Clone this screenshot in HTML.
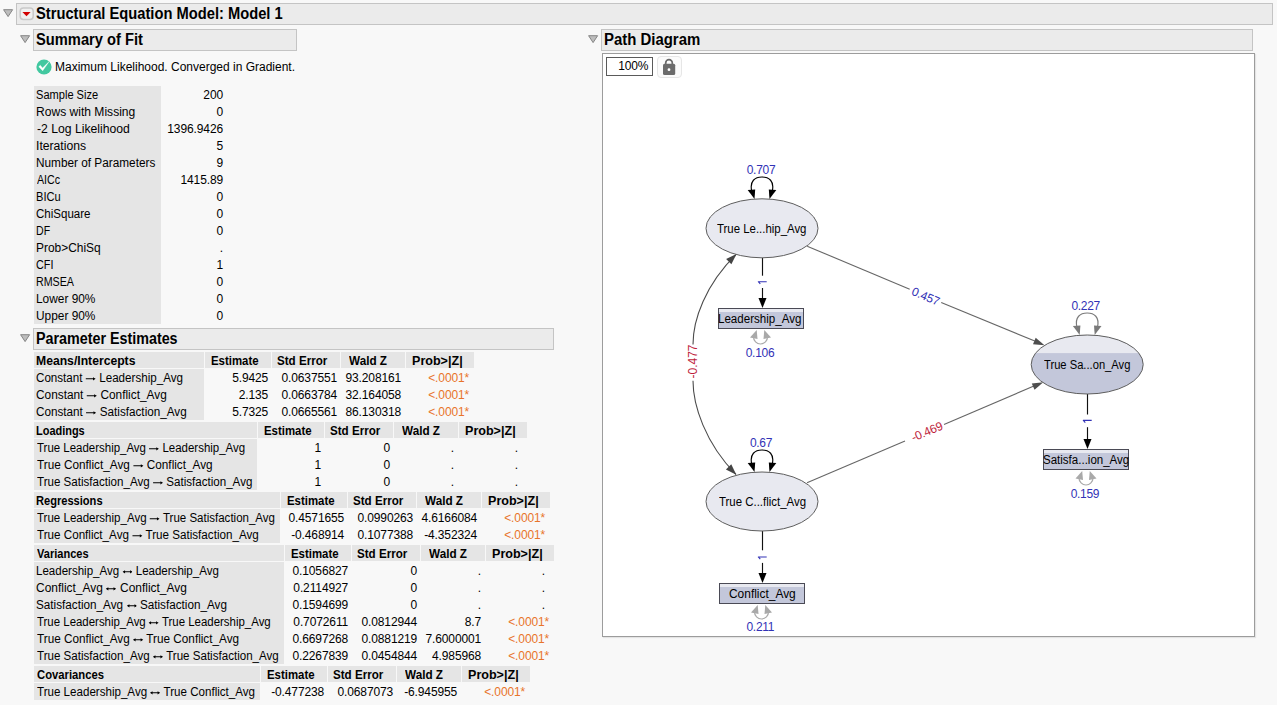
<!DOCTYPE html>
<html><head><meta charset="utf-8"><title>Structural Equation Model: Model 1</title>
<style>
html,body{margin:0;padding:0;}
body{width:1277px;height:705px;overflow:hidden;position:relative;background:#f8f8f8;font-family:"Liberation Sans", sans-serif;}
</style></head><body>
<svg style="position:absolute;left:3px;top:9px" width="12" height="10"><polygon points="0.6,0.7 9.6,0.7 5.1,7.6" fill="#bdbdbd" stroke="#858585" stroke-width="1" stroke-linejoin="round"/></svg>
<div style="position:absolute;left:16px;top:3px;width:1257px;height:22px;box-sizing:border-box;background:#ebebeb;border:1px solid #c4c4c4;"></div>
<svg style="position:absolute;left:16px;top:4px" width="20" height="20"><rect x="4.2" y="3.9" width="13" height="11.6" rx="3.2" fill="#f0f0f0" stroke="#c9c9c9" stroke-width="1.5"/><polygon points="6.4,8 14.6,8 10.5,12.3" fill="#d20000"/></svg>
<div style="position:absolute;top:5.63px;font-size:15.8px;line-height:15.8px;font-weight:700;color:#000;white-space:pre;left:35.57px;transform:scaleX(0.9307);transform-origin:0 0;">Structural Equation Model: Model 1</div>
<svg style="position:absolute;left:20px;top:35px" width="12" height="10"><polygon points="0.6,0.7 9.6,0.7 5.1,7.6" fill="#bdbdbd" stroke="#858585" stroke-width="1" stroke-linejoin="round"/></svg>
<div style="position:absolute;left:33px;top:29px;width:264px;height:22px;box-sizing:border-box;background:#ebebeb;border:1px solid #c4c4c4;"></div>
<div style="position:absolute;top:32.23px;font-size:15.8px;line-height:15.8px;font-weight:700;color:#000;white-space:pre;left:35.57px;transform:scaleX(0.9298);transform-origin:0 0;">Summary of Fit</div>
<svg style="position:absolute;left:35px;top:58px" width="18" height="18"><circle cx="9" cy="9" r="7.6" fill="#42c8a0"/><polygon points="3.8,8.7 5.3,7.3 7.5,10.1 13.9,3.8 7.7,12.8" fill="#fff" stroke="#fff" stroke-width="0.4" stroke-linejoin="round"/></svg>
<div style="position:absolute;top:61.14px;font-size:12px;line-height:12px;font-weight:400;color:#000;white-space:pre;left:55.30px;transform:scaleX(0.9996);transform-origin:0 0;">Maximum Likelihood. Converged in Gradient.</div>
<div style="position:absolute;left:34px;top:86px;width:127px;height:238px;background:#e5e5e5;"></div>
<div style="position:absolute;top:88.84px;font-size:12px;line-height:12px;font-weight:400;color:#000;white-space:pre;left:36.28px;transform:scaleX(0.9227);transform-origin:0 0;">Sample Size</div>
<div style="position:absolute;top:88.84px;font-size:12px;line-height:12px;font-weight:400;color:#000;white-space:pre;letter-spacing:-0.1px;right:1054px;margin-right:-0.1px;">200</div>
<div style="position:absolute;top:105.84px;font-size:12px;line-height:12px;font-weight:400;color:#000;white-space:pre;left:36.19px;transform:scaleX(1.0062);transform-origin:0 0;">Rows with Missing</div>
<div style="position:absolute;top:105.84px;font-size:12px;line-height:12px;font-weight:400;color:#000;white-space:pre;letter-spacing:-0.1px;right:1054px;margin-right:-0.1px;">0</div>
<div style="position:absolute;top:122.84px;font-size:12px;line-height:12px;font-weight:400;color:#000;white-space:pre;left:37.20px;transform:scaleX(1.0154);transform-origin:0 0;">-2 Log Likelihood</div>
<div style="position:absolute;top:122.84px;font-size:12px;line-height:12px;font-weight:400;color:#000;white-space:pre;letter-spacing:-0.1px;right:1054px;margin-right:-0.1px;">1396.9426</div>
<div style="position:absolute;top:139.84px;font-size:12px;line-height:12px;font-weight:400;color:#000;white-space:pre;left:36.19px;transform:scaleX(1.0146);transform-origin:0 0;">Iterations</div>
<div style="position:absolute;top:139.84px;font-size:12px;line-height:12px;font-weight:400;color:#000;white-space:pre;letter-spacing:-0.1px;right:1054px;margin-right:-0.1px;">5</div>
<div style="position:absolute;top:156.84px;font-size:12px;line-height:12px;font-weight:400;color:#000;white-space:pre;left:36.22px;transform:scaleX(0.9833);transform-origin:0 0;">Number of Parameters</div>
<div style="position:absolute;top:156.84px;font-size:12px;line-height:12px;font-weight:400;color:#000;white-space:pre;letter-spacing:-0.1px;right:1054px;margin-right:-0.1px;">9</div>
<div style="position:absolute;top:173.84px;font-size:12px;line-height:12px;font-weight:400;color:#000;white-space:pre;left:37.20px;transform:scaleX(0.8885);transform-origin:0 0;">AICc</div>
<div style="position:absolute;top:173.84px;font-size:12px;line-height:12px;font-weight:400;color:#000;white-space:pre;letter-spacing:-0.1px;right:1054px;margin-right:-0.1px;">1415.89</div>
<div style="position:absolute;top:190.84px;font-size:12px;line-height:12px;font-weight:400;color:#000;white-space:pre;left:36.28px;transform:scaleX(0.9240);transform-origin:0 0;">BICu</div>
<div style="position:absolute;top:190.84px;font-size:12px;line-height:12px;font-weight:400;color:#000;white-space:pre;letter-spacing:-0.1px;right:1054px;margin-right:-0.1px;">0</div>
<div style="position:absolute;top:207.84px;font-size:12px;line-height:12px;font-weight:400;color:#000;white-space:pre;left:36.24px;transform:scaleX(0.9600);transform-origin:0 0;">ChiSquare</div>
<div style="position:absolute;top:207.84px;font-size:12px;line-height:12px;font-weight:400;color:#000;white-space:pre;letter-spacing:-0.1px;right:1054px;margin-right:-0.1px;">0</div>
<div style="position:absolute;top:224.84px;font-size:12px;line-height:12px;font-weight:400;color:#000;white-space:pre;left:36.32px;transform:scaleX(0.8800);transform-origin:0 0;">DF</div>
<div style="position:absolute;top:224.84px;font-size:12px;line-height:12px;font-weight:400;color:#000;white-space:pre;letter-spacing:-0.1px;right:1054px;margin-right:-0.1px;">0</div>
<div style="position:absolute;top:241.84px;font-size:12px;line-height:12px;font-weight:400;color:#000;white-space:pre;left:36.21px;transform:scaleX(0.9937);transform-origin:0 0;">Prob&gt;ChiSq</div>
<div style="position:absolute;top:241.84px;font-size:12px;line-height:12px;font-weight:400;color:#000;white-space:pre;letter-spacing:-0.1px;right:1054px;margin-right:-0.1px;">.</div>
<div style="position:absolute;top:258.84px;font-size:12px;line-height:12px;font-weight:400;color:#000;white-space:pre;left:36.30px;transform:scaleX(0.9000);transform-origin:0 0;">CFI</div>
<div style="position:absolute;top:258.84px;font-size:12px;line-height:12px;font-weight:400;color:#000;white-space:pre;letter-spacing:-0.1px;right:1054px;margin-right:-0.1px;">1</div>
<div style="position:absolute;top:275.84px;font-size:12px;line-height:12px;font-weight:400;color:#000;white-space:pre;left:36.31px;transform:scaleX(0.8905);transform-origin:0 0;">RMSEA</div>
<div style="position:absolute;top:275.84px;font-size:12px;line-height:12px;font-weight:400;color:#000;white-space:pre;letter-spacing:-0.1px;right:1054px;margin-right:-0.1px;">0</div>
<div style="position:absolute;top:292.84px;font-size:12px;line-height:12px;font-weight:400;color:#000;white-space:pre;left:36.21px;transform:scaleX(0.9898);transform-origin:0 0;">Lower 90%</div>
<div style="position:absolute;top:292.84px;font-size:12px;line-height:12px;font-weight:400;color:#000;white-space:pre;letter-spacing:-0.1px;right:1054px;margin-right:-0.1px;">0</div>
<div style="position:absolute;top:309.84px;font-size:12px;line-height:12px;font-weight:400;color:#000;white-space:pre;left:36.21px;transform:scaleX(0.9898);transform-origin:0 0;">Upper 90%</div>
<div style="position:absolute;top:309.84px;font-size:12px;line-height:12px;font-weight:400;color:#000;white-space:pre;letter-spacing:-0.1px;right:1054px;margin-right:-0.1px;">0</div>
<svg style="position:absolute;left:20px;top:334px" width="12" height="10"><polygon points="0.6,0.7 9.6,0.7 5.1,7.6" fill="#bdbdbd" stroke="#858585" stroke-width="1" stroke-linejoin="round"/></svg>
<div style="position:absolute;left:33px;top:328px;width:521px;height:22px;box-sizing:border-box;background:#ebebeb;border:1px solid #c4c4c4;"></div>
<div style="position:absolute;top:330.83px;font-size:15.8px;line-height:15.8px;font-weight:700;color:#000;white-space:pre;left:35.59px;transform:scaleX(0.9058);transform-origin:0 0;">Parameter Estimates</div>
<div style="position:absolute;left:34px;top:352px;width:170px;height:16px;background:#e5e5e5;"></div>
<div style="position:absolute;left:205px;top:352px;width:66px;height:16px;background:#e5e5e5;"></div>
<div style="position:absolute;left:272px;top:352px;width:68px;height:16px;background:#e5e5e5;"></div>
<div style="position:absolute;left:341px;top:352px;width:64px;height:16px;background:#e5e5e5;"></div>
<div style="position:absolute;left:406px;top:352px;width:68px;height:16px;background:#e5e5e5;"></div>
<div style="position:absolute;left:34px;top:369px;width:170px;height:51px;background:#e5e5e5;"></div>
<div style="position:absolute;top:354.84px;font-size:12px;line-height:12px;font-weight:700;color:#000;white-space:pre;left:36.09px;transform:scaleX(1.0144);transform-origin:0 0;">Means/Intercepts</div>
<div style="position:absolute;top:354.84px;font-size:12px;line-height:12px;font-weight:700;color:#000;white-space:pre;left:210.55px;transform:scaleX(0.9510);transform-origin:0 0;">Estimate</div>
<div style="position:absolute;top:354.84px;font-size:12px;line-height:12px;font-weight:700;color:#000;white-space:pre;left:277.13px;transform:scaleX(0.9667);transform-origin:0 0;">Std Error</div>
<div style="position:absolute;top:354.84px;font-size:12px;line-height:12px;font-weight:700;color:#000;white-space:pre;left:349.20px;transform:scaleX(0.9769);transform-origin:0 0;">Wald Z</div>
<div style="position:absolute;top:354.84px;font-size:12px;line-height:12px;font-weight:700;color:#000;white-space:pre;left:412.25px;transform:scaleX(1.0468);transform-origin:0 0;">Prob&gt;|Z|</div>
<div style="position:absolute;top:371.84px;font-size:12px;line-height:12px;font-weight:400;color:#000;white-space:pre;left:36.13px;transform:scaleX(0.9680);transform-origin:0 0;">Constant <svg width="10.6" height="8" viewBox="0 0 10.6 8" style="display:inline-block;vertical-align:baseline"><path d="M0.3 4.8 H8.6" stroke="currentColor" stroke-width="1.1"/><polygon points="10.6,4.8 7.9,3.2 7.9,6.4" fill="currentColor"/></svg> Leadership_Avg</div>
<div style="position:absolute;top:371.84px;font-size:12px;line-height:12px;font-weight:400;color:#000;white-space:pre;letter-spacing:-0.12px;right:1009px;margin-right:-0.12px;">5.9425</div>
<div style="position:absolute;top:371.84px;font-size:12px;line-height:12px;font-weight:400;color:#000;white-space:pre;letter-spacing:-0.12px;right:940px;margin-right:-0.12px;">0.0637551</div>
<div style="position:absolute;top:371.84px;font-size:12px;line-height:12px;font-weight:400;color:#000;white-space:pre;letter-spacing:-0.12px;right:876px;margin-right:-0.12px;">93.208161</div>
<div style="position:absolute;top:371.84px;font-size:12px;line-height:12px;font-weight:400;color:#e8742a;white-space:pre;letter-spacing:-0.12px;right:808px;margin-right:-0.12px;">&lt;.0001*</div>
<div style="position:absolute;top:388.84px;font-size:12px;line-height:12px;font-weight:400;color:#000;white-space:pre;left:36.11px;transform:scaleX(0.9870);transform-origin:0 0;">Constant <svg width="10.6" height="8" viewBox="0 0 10.6 8" style="display:inline-block;vertical-align:baseline"><path d="M0.3 4.8 H8.6" stroke="currentColor" stroke-width="1.1"/><polygon points="10.6,4.8 7.9,3.2 7.9,6.4" fill="currentColor"/></svg> Conflict_Avg</div>
<div style="position:absolute;top:388.84px;font-size:12px;line-height:12px;font-weight:400;color:#000;white-space:pre;letter-spacing:-0.12px;right:1009px;margin-right:-0.12px;">2.135</div>
<div style="position:absolute;top:388.84px;font-size:12px;line-height:12px;font-weight:400;color:#000;white-space:pre;letter-spacing:-0.12px;right:940px;margin-right:-0.12px;">0.0663784</div>
<div style="position:absolute;top:388.84px;font-size:12px;line-height:12px;font-weight:400;color:#000;white-space:pre;letter-spacing:-0.12px;right:876px;margin-right:-0.12px;">32.164058</div>
<div style="position:absolute;top:388.84px;font-size:12px;line-height:12px;font-weight:400;color:#e8742a;white-space:pre;letter-spacing:-0.12px;right:808px;margin-right:-0.12px;">&lt;.0001*</div>
<div style="position:absolute;top:405.84px;font-size:12px;line-height:12px;font-weight:400;color:#000;white-space:pre;left:36.12px;transform:scaleX(0.9758);transform-origin:0 0;">Constant <svg width="10.6" height="8" viewBox="0 0 10.6 8" style="display:inline-block;vertical-align:baseline"><path d="M0.3 4.8 H8.6" stroke="currentColor" stroke-width="1.1"/><polygon points="10.6,4.8 7.9,3.2 7.9,6.4" fill="currentColor"/></svg> Satisfaction_Avg</div>
<div style="position:absolute;top:405.84px;font-size:12px;line-height:12px;font-weight:400;color:#000;white-space:pre;letter-spacing:-0.12px;right:1009px;margin-right:-0.12px;">5.7325</div>
<div style="position:absolute;top:405.84px;font-size:12px;line-height:12px;font-weight:400;color:#000;white-space:pre;letter-spacing:-0.12px;right:940px;margin-right:-0.12px;">0.0665561</div>
<div style="position:absolute;top:405.84px;font-size:12px;line-height:12px;font-weight:400;color:#000;white-space:pre;letter-spacing:-0.12px;right:876px;margin-right:-0.12px;">86.130318</div>
<div style="position:absolute;top:405.84px;font-size:12px;line-height:12px;font-weight:400;color:#e8742a;white-space:pre;letter-spacing:-0.12px;right:808px;margin-right:-0.12px;">&lt;.0001*</div>
<div style="position:absolute;left:34px;top:422px;width:223px;height:16px;background:#e5e5e5;"></div>
<div style="position:absolute;left:258px;top:422px;width:66px;height:16px;background:#e5e5e5;"></div>
<div style="position:absolute;left:325px;top:422px;width:68px;height:16px;background:#e5e5e5;"></div>
<div style="position:absolute;left:394px;top:422px;width:64px;height:16px;background:#e5e5e5;"></div>
<div style="position:absolute;left:459px;top:422px;width:68px;height:16px;background:#e5e5e5;"></div>
<div style="position:absolute;left:34px;top:439px;width:223px;height:51px;background:#e5e5e5;"></div>
<div style="position:absolute;top:424.84px;font-size:12px;line-height:12px;font-weight:700;color:#000;white-space:pre;left:36.19px;transform:scaleX(0.9135);transform-origin:0 0;">Loadings</div>
<div style="position:absolute;top:424.84px;font-size:12px;line-height:12px;font-weight:700;color:#000;white-space:pre;left:263.55px;transform:scaleX(0.9510);transform-origin:0 0;">Estimate</div>
<div style="position:absolute;top:424.84px;font-size:12px;line-height:12px;font-weight:700;color:#000;white-space:pre;left:330.13px;transform:scaleX(0.9667);transform-origin:0 0;">Std Error</div>
<div style="position:absolute;top:424.84px;font-size:12px;line-height:12px;font-weight:700;color:#000;white-space:pre;left:402.20px;transform:scaleX(0.9769);transform-origin:0 0;">Wald Z</div>
<div style="position:absolute;top:424.84px;font-size:12px;line-height:12px;font-weight:700;color:#000;white-space:pre;left:465.25px;transform:scaleX(1.0468);transform-origin:0 0;">Prob&gt;|Z|</div>
<div style="position:absolute;top:441.84px;font-size:12px;line-height:12px;font-weight:400;color:#000;white-space:pre;left:37.10px;transform:scaleX(0.9553);transform-origin:0 0;">True Leadership_Avg <svg width="10.6" height="8" viewBox="0 0 10.6 8" style="display:inline-block;vertical-align:baseline"><path d="M0.3 4.8 H8.6" stroke="currentColor" stroke-width="1.1"/><polygon points="10.6,4.8 7.9,3.2 7.9,6.4" fill="currentColor"/></svg> Leadership_Avg</div>
<div style="position:absolute;top:441.84px;font-size:12px;line-height:12px;font-weight:400;color:#000;white-space:pre;letter-spacing:-0.12px;right:956px;margin-right:-0.12px;">1</div>
<div style="position:absolute;top:441.84px;font-size:12px;line-height:12px;font-weight:400;color:#000;white-space:pre;letter-spacing:-0.12px;right:887px;margin-right:-0.12px;">0</div>
<div style="position:absolute;top:441.84px;font-size:12px;line-height:12px;font-weight:400;color:#000;white-space:pre;right:823px;">.</div>
<div style="position:absolute;top:441.84px;font-size:12px;line-height:12px;font-weight:400;color:#000;white-space:pre;right:759px;">.</div>
<div style="position:absolute;top:458.84px;font-size:12px;line-height:12px;font-weight:400;color:#000;white-space:pre;left:37.10px;transform:scaleX(0.9804);transform-origin:0 0;">True Conflict_Avg <svg width="10.6" height="8" viewBox="0 0 10.6 8" style="display:inline-block;vertical-align:baseline"><path d="M0.3 4.8 H8.6" stroke="currentColor" stroke-width="1.1"/><polygon points="10.6,4.8 7.9,3.2 7.9,6.4" fill="currentColor"/></svg> Conflict_Avg</div>
<div style="position:absolute;top:458.84px;font-size:12px;line-height:12px;font-weight:400;color:#000;white-space:pre;letter-spacing:-0.12px;right:956px;margin-right:-0.12px;">1</div>
<div style="position:absolute;top:458.84px;font-size:12px;line-height:12px;font-weight:400;color:#000;white-space:pre;letter-spacing:-0.12px;right:887px;margin-right:-0.12px;">0</div>
<div style="position:absolute;top:458.84px;font-size:12px;line-height:12px;font-weight:400;color:#000;white-space:pre;right:823px;">.</div>
<div style="position:absolute;top:458.84px;font-size:12px;line-height:12px;font-weight:400;color:#000;white-space:pre;right:759px;">.</div>
<div style="position:absolute;top:475.84px;font-size:12px;line-height:12px;font-weight:400;color:#000;white-space:pre;left:37.10px;transform:scaleX(0.9650);transform-origin:0 0;">True Satisfaction_Avg <svg width="10.6" height="8" viewBox="0 0 10.6 8" style="display:inline-block;vertical-align:baseline"><path d="M0.3 4.8 H8.6" stroke="currentColor" stroke-width="1.1"/><polygon points="10.6,4.8 7.9,3.2 7.9,6.4" fill="currentColor"/></svg> Satisfaction_Avg</div>
<div style="position:absolute;top:475.84px;font-size:12px;line-height:12px;font-weight:400;color:#000;white-space:pre;letter-spacing:-0.12px;right:956px;margin-right:-0.12px;">1</div>
<div style="position:absolute;top:475.84px;font-size:12px;line-height:12px;font-weight:400;color:#000;white-space:pre;letter-spacing:-0.12px;right:887px;margin-right:-0.12px;">0</div>
<div style="position:absolute;top:475.84px;font-size:12px;line-height:12px;font-weight:400;color:#000;white-space:pre;right:823px;">.</div>
<div style="position:absolute;top:475.84px;font-size:12px;line-height:12px;font-weight:400;color:#000;white-space:pre;right:759px;">.</div>
<div style="position:absolute;left:34px;top:492px;width:246px;height:16px;background:#e5e5e5;"></div>
<div style="position:absolute;left:281px;top:492px;width:66px;height:16px;background:#e5e5e5;"></div>
<div style="position:absolute;left:348px;top:492px;width:68px;height:16px;background:#e5e5e5;"></div>
<div style="position:absolute;left:417px;top:492px;width:64px;height:16px;background:#e5e5e5;"></div>
<div style="position:absolute;left:482px;top:492px;width:68px;height:16px;background:#e5e5e5;"></div>
<div style="position:absolute;left:34px;top:509px;width:246px;height:34px;background:#e5e5e5;"></div>
<div style="position:absolute;top:494.84px;font-size:12px;line-height:12px;font-weight:700;color:#000;white-space:pre;left:36.18px;transform:scaleX(0.9239);transform-origin:0 0;">Regressions</div>
<div style="position:absolute;top:494.84px;font-size:12px;line-height:12px;font-weight:700;color:#000;white-space:pre;left:286.55px;transform:scaleX(0.9510);transform-origin:0 0;">Estimate</div>
<div style="position:absolute;top:494.84px;font-size:12px;line-height:12px;font-weight:700;color:#000;white-space:pre;left:353.13px;transform:scaleX(0.9667);transform-origin:0 0;">Std Error</div>
<div style="position:absolute;top:494.84px;font-size:12px;line-height:12px;font-weight:700;color:#000;white-space:pre;left:425.20px;transform:scaleX(0.9769);transform-origin:0 0;">Wald Z</div>
<div style="position:absolute;top:494.84px;font-size:12px;line-height:12px;font-weight:700;color:#000;white-space:pre;left:488.25px;transform:scaleX(1.0468);transform-origin:0 0;">Prob&gt;|Z|</div>
<div style="position:absolute;top:511.84px;font-size:12px;line-height:12px;font-weight:400;color:#000;white-space:pre;left:37.10px;transform:scaleX(0.9603);transform-origin:0 0;">True Leadership_Avg <svg width="10.6" height="8" viewBox="0 0 10.6 8" style="display:inline-block;vertical-align:baseline"><path d="M0.3 4.8 H8.6" stroke="currentColor" stroke-width="1.1"/><polygon points="10.6,4.8 7.9,3.2 7.9,6.4" fill="currentColor"/></svg> True Satisfaction_Avg</div>
<div style="position:absolute;top:511.84px;font-size:12px;line-height:12px;font-weight:400;color:#000;white-space:pre;letter-spacing:-0.12px;right:933px;margin-right:-0.12px;">0.4571655</div>
<div style="position:absolute;top:511.84px;font-size:12px;line-height:12px;font-weight:400;color:#000;white-space:pre;letter-spacing:-0.12px;right:864px;margin-right:-0.12px;">0.0990263</div>
<div style="position:absolute;top:511.84px;font-size:12px;line-height:12px;font-weight:400;color:#000;white-space:pre;letter-spacing:-0.12px;right:800px;margin-right:-0.12px;">4.6166084</div>
<div style="position:absolute;top:511.84px;font-size:12px;line-height:12px;font-weight:400;color:#e8742a;white-space:pre;letter-spacing:-0.12px;right:732px;margin-right:-0.12px;">&lt;.0001*</div>
<div style="position:absolute;top:528.84px;font-size:12px;line-height:12px;font-weight:400;color:#000;white-space:pre;left:37.10px;transform:scaleX(0.9706);transform-origin:0 0;">True Conflict_Avg <svg width="10.6" height="8" viewBox="0 0 10.6 8" style="display:inline-block;vertical-align:baseline"><path d="M0.3 4.8 H8.6" stroke="currentColor" stroke-width="1.1"/><polygon points="10.6,4.8 7.9,3.2 7.9,6.4" fill="currentColor"/></svg> True Satisfaction_Avg</div>
<div style="position:absolute;top:528.84px;font-size:12px;line-height:12px;font-weight:400;color:#000;white-space:pre;letter-spacing:-0.12px;right:933px;margin-right:-0.12px;">-0.468914</div>
<div style="position:absolute;top:528.84px;font-size:12px;line-height:12px;font-weight:400;color:#000;white-space:pre;letter-spacing:-0.12px;right:864px;margin-right:-0.12px;">0.1077388</div>
<div style="position:absolute;top:528.84px;font-size:12px;line-height:12px;font-weight:400;color:#000;white-space:pre;letter-spacing:-0.12px;right:800px;margin-right:-0.12px;">-4.352324</div>
<div style="position:absolute;top:528.84px;font-size:12px;line-height:12px;font-weight:400;color:#e8742a;white-space:pre;letter-spacing:-0.12px;right:732px;margin-right:-0.12px;">&lt;.0001*</div>
<div style="position:absolute;left:34px;top:545px;width:250px;height:16px;background:#e5e5e5;"></div>
<div style="position:absolute;left:285px;top:545px;width:66px;height:16px;background:#e5e5e5;"></div>
<div style="position:absolute;left:352px;top:545px;width:68px;height:16px;background:#e5e5e5;"></div>
<div style="position:absolute;left:421px;top:545px;width:64px;height:16px;background:#e5e5e5;"></div>
<div style="position:absolute;left:486px;top:545px;width:68px;height:16px;background:#e5e5e5;"></div>
<div style="position:absolute;left:34px;top:562px;width:250px;height:102px;background:#e5e5e5;"></div>
<div style="position:absolute;top:547.84px;font-size:12px;line-height:12px;font-weight:700;color:#000;white-space:pre;left:37.10px;transform:scaleX(0.9196);transform-origin:0 0;">Variances</div>
<div style="position:absolute;top:547.84px;font-size:12px;line-height:12px;font-weight:700;color:#000;white-space:pre;left:290.55px;transform:scaleX(0.9510);transform-origin:0 0;">Estimate</div>
<div style="position:absolute;top:547.84px;font-size:12px;line-height:12px;font-weight:700;color:#000;white-space:pre;left:357.13px;transform:scaleX(0.9667);transform-origin:0 0;">Std Error</div>
<div style="position:absolute;top:547.84px;font-size:12px;line-height:12px;font-weight:700;color:#000;white-space:pre;left:429.20px;transform:scaleX(0.9769);transform-origin:0 0;">Wald Z</div>
<div style="position:absolute;top:547.84px;font-size:12px;line-height:12px;font-weight:700;color:#000;white-space:pre;left:492.25px;transform:scaleX(1.0468);transform-origin:0 0;">Prob&gt;|Z|</div>
<div style="position:absolute;top:564.84px;font-size:12px;line-height:12px;font-weight:400;color:#000;white-space:pre;left:36.14px;transform:scaleX(0.9608);transform-origin:0 0;">Leadership_Avg <svg width="10.6" height="8" viewBox="0 0 10.6 8" style="display:inline-block;vertical-align:baseline"><path d="M2 4.8 H8.6" stroke="currentColor" stroke-width="1.1"/><polygon points="10.6,4.8 7.9,3.2 7.9,6.4" fill="currentColor"/><polygon points="0,4.8 2.7,3.2 2.7,6.4" fill="currentColor"/></svg> Leadership_Avg</div>
<div style="position:absolute;top:564.84px;font-size:12px;line-height:12px;font-weight:400;color:#000;white-space:pre;letter-spacing:-0.12px;right:929px;margin-right:-0.12px;">0.1056827</div>
<div style="position:absolute;top:564.84px;font-size:12px;line-height:12px;font-weight:400;color:#000;white-space:pre;letter-spacing:-0.12px;right:860px;margin-right:-0.12px;">0</div>
<div style="position:absolute;top:564.84px;font-size:12px;line-height:12px;font-weight:400;color:#000;white-space:pre;right:796px;">.</div>
<div style="position:absolute;top:564.84px;font-size:12px;line-height:12px;font-weight:400;color:#000;white-space:pre;right:732px;">.</div>
<div style="position:absolute;top:581.84px;font-size:12px;line-height:12px;font-weight:400;color:#000;white-space:pre;left:36.10px;transform:scaleX(0.9953);transform-origin:0 0;">Conflict_Avg <svg width="10.6" height="8" viewBox="0 0 10.6 8" style="display:inline-block;vertical-align:baseline"><path d="M2 4.8 H8.6" stroke="currentColor" stroke-width="1.1"/><polygon points="10.6,4.8 7.9,3.2 7.9,6.4" fill="currentColor"/><polygon points="0,4.8 2.7,3.2 2.7,6.4" fill="currentColor"/></svg> Conflict_Avg</div>
<div style="position:absolute;top:581.84px;font-size:12px;line-height:12px;font-weight:400;color:#000;white-space:pre;letter-spacing:-0.12px;right:929px;margin-right:-0.12px;">0.2114927</div>
<div style="position:absolute;top:581.84px;font-size:12px;line-height:12px;font-weight:400;color:#000;white-space:pre;letter-spacing:-0.12px;right:860px;margin-right:-0.12px;">0</div>
<div style="position:absolute;top:581.84px;font-size:12px;line-height:12px;font-weight:400;color:#000;white-space:pre;right:796px;">.</div>
<div style="position:absolute;top:581.84px;font-size:12px;line-height:12px;font-weight:400;color:#000;white-space:pre;right:732px;">.</div>
<div style="position:absolute;top:598.84px;font-size:12px;line-height:12px;font-weight:400;color:#000;white-space:pre;left:36.12px;transform:scaleX(0.9763);transform-origin:0 0;">Satisfaction_Avg <svg width="10.6" height="8" viewBox="0 0 10.6 8" style="display:inline-block;vertical-align:baseline"><path d="M2 4.8 H8.6" stroke="currentColor" stroke-width="1.1"/><polygon points="10.6,4.8 7.9,3.2 7.9,6.4" fill="currentColor"/><polygon points="0,4.8 2.7,3.2 2.7,6.4" fill="currentColor"/></svg> Satisfaction_Avg</div>
<div style="position:absolute;top:598.84px;font-size:12px;line-height:12px;font-weight:400;color:#000;white-space:pre;letter-spacing:-0.12px;right:929px;margin-right:-0.12px;">0.1594699</div>
<div style="position:absolute;top:598.84px;font-size:12px;line-height:12px;font-weight:400;color:#000;white-space:pre;letter-spacing:-0.12px;right:860px;margin-right:-0.12px;">0</div>
<div style="position:absolute;top:598.84px;font-size:12px;line-height:12px;font-weight:400;color:#000;white-space:pre;right:796px;">.</div>
<div style="position:absolute;top:598.84px;font-size:12px;line-height:12px;font-weight:400;color:#000;white-space:pre;right:732px;">.</div>
<div style="position:absolute;top:615.84px;font-size:12px;line-height:12px;font-weight:400;color:#000;white-space:pre;left:37.10px;transform:scaleX(0.9531);transform-origin:0 0;">True Leadership_Avg <svg width="10.6" height="8" viewBox="0 0 10.6 8" style="display:inline-block;vertical-align:baseline"><path d="M2 4.8 H8.6" stroke="currentColor" stroke-width="1.1"/><polygon points="10.6,4.8 7.9,3.2 7.9,6.4" fill="currentColor"/><polygon points="0,4.8 2.7,3.2 2.7,6.4" fill="currentColor"/></svg> True Leadership_Avg</div>
<div style="position:absolute;top:615.84px;font-size:12px;line-height:12px;font-weight:400;color:#000;white-space:pre;letter-spacing:-0.12px;right:929px;margin-right:-0.12px;">0.7072611</div>
<div style="position:absolute;top:615.84px;font-size:12px;line-height:12px;font-weight:400;color:#000;white-space:pre;letter-spacing:-0.12px;right:860px;margin-right:-0.12px;">0.0812944</div>
<div style="position:absolute;top:615.84px;font-size:12px;line-height:12px;font-weight:400;color:#000;white-space:pre;letter-spacing:-0.12px;right:796px;margin-right:-0.12px;">8.7</div>
<div style="position:absolute;top:615.84px;font-size:12px;line-height:12px;font-weight:400;color:#e8742a;white-space:pre;letter-spacing:-0.12px;right:728px;margin-right:-0.12px;">&lt;.0001*</div>
<div style="position:absolute;top:632.84px;font-size:12px;line-height:12px;font-weight:400;color:#000;white-space:pre;left:37.10px;transform:scaleX(0.9786);transform-origin:0 0;">True Conflict_Avg <svg width="10.6" height="8" viewBox="0 0 10.6 8" style="display:inline-block;vertical-align:baseline"><path d="M2 4.8 H8.6" stroke="currentColor" stroke-width="1.1"/><polygon points="10.6,4.8 7.9,3.2 7.9,6.4" fill="currentColor"/><polygon points="0,4.8 2.7,3.2 2.7,6.4" fill="currentColor"/></svg> True Conflict_Avg</div>
<div style="position:absolute;top:632.84px;font-size:12px;line-height:12px;font-weight:400;color:#000;white-space:pre;letter-spacing:-0.12px;right:929px;margin-right:-0.12px;">0.6697268</div>
<div style="position:absolute;top:632.84px;font-size:12px;line-height:12px;font-weight:400;color:#000;white-space:pre;letter-spacing:-0.12px;right:860px;margin-right:-0.12px;">0.0881219</div>
<div style="position:absolute;top:632.84px;font-size:12px;line-height:12px;font-weight:400;color:#000;white-space:pre;letter-spacing:-0.12px;right:796px;margin-right:-0.12px;">7.6000001</div>
<div style="position:absolute;top:632.84px;font-size:12px;line-height:12px;font-weight:400;color:#e8742a;white-space:pre;letter-spacing:-0.12px;right:728px;margin-right:-0.12px;">&lt;.0001*</div>
<div style="position:absolute;top:649.84px;font-size:12px;line-height:12px;font-weight:400;color:#000;white-space:pre;left:37.10px;transform:scaleX(0.9652);transform-origin:0 0;">True Satisfaction_Avg <svg width="10.6" height="8" viewBox="0 0 10.6 8" style="display:inline-block;vertical-align:baseline"><path d="M2 4.8 H8.6" stroke="currentColor" stroke-width="1.1"/><polygon points="10.6,4.8 7.9,3.2 7.9,6.4" fill="currentColor"/><polygon points="0,4.8 2.7,3.2 2.7,6.4" fill="currentColor"/></svg> True Satisfaction_Avg</div>
<div style="position:absolute;top:649.84px;font-size:12px;line-height:12px;font-weight:400;color:#000;white-space:pre;letter-spacing:-0.12px;right:929px;margin-right:-0.12px;">0.2267839</div>
<div style="position:absolute;top:649.84px;font-size:12px;line-height:12px;font-weight:400;color:#000;white-space:pre;letter-spacing:-0.12px;right:860px;margin-right:-0.12px;">0.0454844</div>
<div style="position:absolute;top:649.84px;font-size:12px;line-height:12px;font-weight:400;color:#000;white-space:pre;letter-spacing:-0.12px;right:796px;margin-right:-0.12px;">4.985968</div>
<div style="position:absolute;top:649.84px;font-size:12px;line-height:12px;font-weight:400;color:#e8742a;white-space:pre;letter-spacing:-0.12px;right:728px;margin-right:-0.12px;">&lt;.0001*</div>
<div style="position:absolute;left:34px;top:666px;width:226px;height:16px;background:#e5e5e5;"></div>
<div style="position:absolute;left:261px;top:666px;width:66px;height:16px;background:#e5e5e5;"></div>
<div style="position:absolute;left:328px;top:666px;width:68px;height:16px;background:#e5e5e5;"></div>
<div style="position:absolute;left:397px;top:666px;width:64px;height:16px;background:#e5e5e5;"></div>
<div style="position:absolute;left:462px;top:666px;width:68px;height:16px;background:#e5e5e5;"></div>
<div style="position:absolute;left:34px;top:683px;width:226px;height:17px;background:#e5e5e5;"></div>
<div style="position:absolute;top:668.84px;font-size:12px;line-height:12px;font-weight:700;color:#000;white-space:pre;left:37.10px;transform:scaleX(0.9380);transform-origin:0 0;">Covariances</div>
<div style="position:absolute;top:668.84px;font-size:12px;line-height:12px;font-weight:700;color:#000;white-space:pre;left:266.55px;transform:scaleX(0.9510);transform-origin:0 0;">Estimate</div>
<div style="position:absolute;top:668.84px;font-size:12px;line-height:12px;font-weight:700;color:#000;white-space:pre;left:333.13px;transform:scaleX(0.9667);transform-origin:0 0;">Std Error</div>
<div style="position:absolute;top:668.84px;font-size:12px;line-height:12px;font-weight:700;color:#000;white-space:pre;left:405.20px;transform:scaleX(0.9769);transform-origin:0 0;">Wald Z</div>
<div style="position:absolute;top:668.84px;font-size:12px;line-height:12px;font-weight:700;color:#000;white-space:pre;left:468.25px;transform:scaleX(1.0468);transform-origin:0 0;">Prob&gt;|Z|</div>
<div style="position:absolute;top:685.84px;font-size:12px;line-height:12px;font-weight:400;color:#000;white-space:pre;left:37.10px;transform:scaleX(0.9653);transform-origin:0 0;">True Leadership_Avg <svg width="10.6" height="8" viewBox="0 0 10.6 8" style="display:inline-block;vertical-align:baseline"><path d="M2 4.8 H8.6" stroke="currentColor" stroke-width="1.1"/><polygon points="10.6,4.8 7.9,3.2 7.9,6.4" fill="currentColor"/><polygon points="0,4.8 2.7,3.2 2.7,6.4" fill="currentColor"/></svg> True Conflict_Avg</div>
<div style="position:absolute;top:685.84px;font-size:12px;line-height:12px;font-weight:400;color:#000;white-space:pre;letter-spacing:-0.12px;right:953px;margin-right:-0.12px;">-0.477238</div>
<div style="position:absolute;top:685.84px;font-size:12px;line-height:12px;font-weight:400;color:#000;white-space:pre;letter-spacing:-0.12px;right:884px;margin-right:-0.12px;">0.0687073</div>
<div style="position:absolute;top:685.84px;font-size:12px;line-height:12px;font-weight:400;color:#000;white-space:pre;letter-spacing:-0.12px;right:820px;margin-right:-0.12px;">-6.945955</div>
<div style="position:absolute;top:685.84px;font-size:12px;line-height:12px;font-weight:400;color:#e8742a;white-space:pre;letter-spacing:-0.12px;right:752px;margin-right:-0.12px;">&lt;.0001*</div>
<svg style="position:absolute;left:588px;top:35px" width="12" height="10"><polygon points="0.6,0.7 9.6,0.7 5.1,7.6" fill="#bdbdbd" stroke="#858585" stroke-width="1" stroke-linejoin="round"/></svg>
<div style="position:absolute;left:601px;top:29px;width:652px;height:22px;box-sizing:border-box;background:#ebebeb;border:1px solid #c4c4c4;"></div>
<div style="position:absolute;top:32.23px;font-size:15.8px;line-height:15.8px;font-weight:700;color:#000;white-space:pre;left:603.65px;transform:scaleX(0.9450);transform-origin:0 0;">Path Diagram</div>
<div style="position:absolute;left:602px;top:53px;width:653px;height:584px;box-sizing:border-box;background:#fff;border:1px solid #9c9c9c;box-shadow:1px 1px 1px rgba(0,0,0,0.08);"></div>
<div style="position:absolute;left:606px;top:57px;width:47px;height:19px;box-sizing:border-box;background:#fff;border:1px solid #5a5a5a;"></div>
<div style="position:absolute;top:60.04px;font-size:12px;line-height:12px;font-weight:400;color:#000;white-space:pre;letter-spacing:-0.2px;right:629px;margin-right:-0.2px;">100%</div>
<div style="position:absolute;left:657px;top:56px;width:25px;height:22px;box-sizing:border-box;background:#fbfbfb;border:1px solid #e6e6e6;border-radius:4px;"></div>
<svg style="position:absolute;left:657px;top:56px" width="25" height="22"><path d="M8.7 8 V7 A3.3 3.3 0 0 1 15.3 7 V8.5" fill="none" stroke="#6b6b6b" stroke-width="1.7"/><rect x="6" y="7.7" width="12.2" height="11.3" rx="1.5" fill="#6b6b6b"/><circle cx="12" cy="13.7" r="1.4" fill="#fff"/></svg>
<svg style="position:absolute;left:0;top:0" width="1277" height="705" font-family='"Liberation Sans", sans-serif'><line x1="807.2" y1="246.2" x2="909.7" y2="289.2" stroke="#666" stroke-width="1.1"/><line x1="941.2" y1="302.5" x2="1036" y2="341.6" stroke="#666" stroke-width="1.1"/><polygon points="1044.50,345.30 1033.00,344.30 1035.69,337.84" fill="#4e4e4e"/><text x="0" y="0" transform="translate(925.6,296.5) rotate(22.6)" text-anchor="middle" dominant-baseline="central" font-size="12" letter-spacing="-0.2" fill="#3232b6">0.457</text><line x1="807" y1="482.8" x2="905" y2="441" stroke="#666" stroke-width="1.1"/><line x1="944" y1="424.4" x2="1034.5" y2="385.8" stroke="#666" stroke-width="1.1"/><polygon points="1043.30,382.30 1034.55,389.83 1031.81,383.39" fill="#4e4e4e"/><text x="0" y="0" transform="translate(927,431.6) rotate(-23.1)" text-anchor="middle" dominant-baseline="central" font-size="12" letter-spacing="-0.2" fill="#be1e3c">-0.469</text><path d="M736.6 253.9 C 705 285, 693 320, 693 344.4" fill="none" stroke="#4c4c4c" stroke-width="1.1"/><path d="M693 380.8 C 693 405, 705 443, 736 474.5" fill="none" stroke="#4c4c4c" stroke-width="1.1"/><polygon points="736.60,253.90 731.39,264.29 726.13,258.94" fill="#444"/><polygon points="736.30,474.80 725.91,469.59 731.26,464.33" fill="#444"/><text x="0" y="0" transform="translate(692.7,361.5) rotate(-90)" text-anchor="middle" dominant-baseline="central" font-size="12" fill="#be1e3c">-0.477</text><line x1="762.5" y1="258" x2="762.5" y2="275.7" stroke="#111" stroke-width="1.15"/><line x1="762.5" y1="288" x2="762.5" y2="300" stroke="#111" stroke-width="1.15"/><polygon points="762.50,308.00 758.50,298.00 766.50,298.00" fill="#000"/><path d="M766.7 281.7 H758.3 L760.3 283.9" fill="none" stroke="#3232b6" stroke-width="1.1" stroke-linejoin="round"/><line x1="762.5" y1="530.7" x2="762.5" y2="550.3" stroke="#111" stroke-width="1.15"/><line x1="762.5" y1="562.9" x2="762.5" y2="575" stroke="#111" stroke-width="1.15"/><polygon points="762.50,583.00 758.50,573.00 766.50,573.00" fill="#000"/><path d="M766.7 557.0 H758.3 L760.3 559.1999999999999" fill="none" stroke="#3232b6" stroke-width="1.1" stroke-linejoin="round"/><line x1="1087.5" y1="394" x2="1087.5" y2="414.5" stroke="#111" stroke-width="1.15"/><line x1="1087.5" y1="427.2" x2="1087.5" y2="441" stroke="#111" stroke-width="1.15"/><polygon points="1087.50,449.00 1083.50,439.00 1091.50,439.00" fill="#000"/><path d="M1091.7 420.4 H1083.3 L1085.3 422.59999999999997" fill="none" stroke="#3232b6" stroke-width="1.1" stroke-linejoin="round"/><ellipse cx="762" cy="228.3" rx="56" ry="29.5" fill="#e8e9f0" stroke="#5e5e5e" stroke-width="1"/><ellipse cx="762" cy="501.5" rx="56" ry="29.5" fill="#e8e9f0" stroke="#5e5e5e" stroke-width="1"/><clipPath id="clipS"><ellipse cx="1087.2" cy="364.5" rx="56" ry="29.5"/></clipPath><ellipse cx="1087.2" cy="364.5" rx="56" ry="29.5" fill="#c3c7da"/><rect x="1027.2" y="333.5" width="120" height="19.6" fill="#e8e9f0" clip-path="url(#clipS)" /><ellipse cx="1087.2" cy="364.5" rx="56" ry="29.5" fill="none" stroke="#5e5e5e" stroke-width="1"/><rect x="718.5" y="308.5" width="85" height="20" fill="#c3c7da" stroke="#4a4a55" stroke-width="1"/><rect x="719" y="309" width="84" height="3" fill="#e8e9f0"/><rect x="719.5" y="583.5" width="85" height="20" fill="#c3c7da" stroke="#4a4a55" stroke-width="1"/><rect x="720" y="584" width="84" height="3" fill="#e8e9f0"/><rect x="1043.5" y="449.5" width="85" height="20" fill="#c3c7da" stroke="#4a4a55" stroke-width="1"/><rect x="1044" y="450" width="84" height="3" fill="#e8e9f0"/><path d="M751.7 191 C749.5 181, 755 177, 762 177 C769 177, 774.5 181, 772.3 191" fill="none" stroke="#000" stroke-width="1.15"/><polygon points="747.7,190 755.2,189.5 754.5,199" fill="#000"/><polygon points="776.3,190 768.8,189.5 769.5,199" fill="#000"/><path d="M751.7 464.0 C749.5 454.0, 755 450.0, 762 450.0 C769 450.0, 774.5 454.0, 772.3 464.0" fill="none" stroke="#000" stroke-width="1.15"/><polygon points="747.7,463.0 755.2,462.5 754.5,472.0" fill="#000"/><polygon points="776.3,463.0 768.8,462.5 769.5,472.0" fill="#000"/><path d="M1076.9 327 C1074.7 317, 1080.2 313, 1087.2 313 C1094.2 313, 1099.7 317, 1097.5 327" fill="none" stroke="#7a7a7a" stroke-width="1.15"/><polygon points="1072.9,326 1080.4,325.5 1079.7,335" fill="#7a7a7a"/><polygon points="1101.5,326 1094.0,325.5 1094.7,335" fill="#7a7a7a"/><path d="M753.5 337 A7 7 0 0 0 767.5 337" fill="none" stroke="#a9a9a9" stroke-width="1.2"/><polygon points="756.7,330 750.0,337.5 757.5,339" fill="#a9a9a9"/><polygon points="764.3,330 771.0,337.5 763.5,339" fill="#a9a9a9"/><path d="M754.5 612 A7 7 0 0 0 768.5 612" fill="none" stroke="#a9a9a9" stroke-width="1.2"/><polygon points="757.7,605 751.0,612.5 758.5,614" fill="#a9a9a9"/><polygon points="765.3,605 772.0,612.5 764.5,614" fill="#a9a9a9"/><path d="M1079 478 A7 7 0 0 0 1093 478" fill="none" stroke="#a9a9a9" stroke-width="1.2"/><polygon points="1082.2,471 1075.5,478.5 1083,480" fill="#a9a9a9"/><polygon points="1089.8,471 1096.5,478.5 1089,480" fill="#a9a9a9"/><text x="761" y="173.8" text-anchor="middle" font-size="12" letter-spacing="-0.3" fill="#3232b6">0.707</text><text x="760" y="356.6" text-anchor="middle" font-size="12" letter-spacing="-0.3" fill="#3232b6">0.106</text><text x="761" y="447.3" text-anchor="middle" font-size="12" letter-spacing="-0.3" fill="#3232b6">0.67</text><text x="760.3" y="631.4" text-anchor="middle" font-size="12" letter-spacing="-0.3" fill="#3232b6">0.211</text><text x="1085.7" y="309.9" text-anchor="middle" font-size="12" letter-spacing="-0.3" fill="#3232b6">0.227</text><text x="1084.9" y="497.6" text-anchor="middle" font-size="12" letter-spacing="-0.3" fill="#3232b6">0.159</text></svg>
<div style="position:absolute;top:222.64px;font-size:12px;line-height:12px;font-weight:400;color:#000;white-space:pre;left:717.20px;transform:scaleX(0.9511);transform-origin:0 0;">True Le...hip_Avg</div>
<div style="position:absolute;top:495.54px;font-size:12px;line-height:12px;font-weight:400;color:#000;white-space:pre;left:718.70px;transform:scaleX(0.9527);transform-origin:0 0;">True C...flict_Avg</div>
<div style="position:absolute;top:358.54px;font-size:12px;line-height:12px;font-weight:400;color:#000;white-space:pre;left:1043.60px;transform:scaleX(0.9315);transform-origin:0 0;">True Sa...on_Avg</div>
<div style="position:absolute;top:312.94px;font-size:12px;line-height:12px;font-weight:400;color:#000;white-space:pre;left:718.44px;transform:scaleX(0.9635);transform-origin:0 0;">Leadership_Avg</div>
<div style="position:absolute;top:587.94px;font-size:12px;line-height:12px;font-weight:400;color:#000;white-space:pre;left:728.71px;transform:scaleX(0.9939);transform-origin:0 0;">Conflict_Avg</div>
<div style="position:absolute;top:453.74px;font-size:12px;line-height:12px;font-weight:400;color:#000;white-space:pre;left:1042.54px;transform:scaleX(0.9602);transform-origin:0 0;">Satisfa...ion_Avg</div>
</body></html>
